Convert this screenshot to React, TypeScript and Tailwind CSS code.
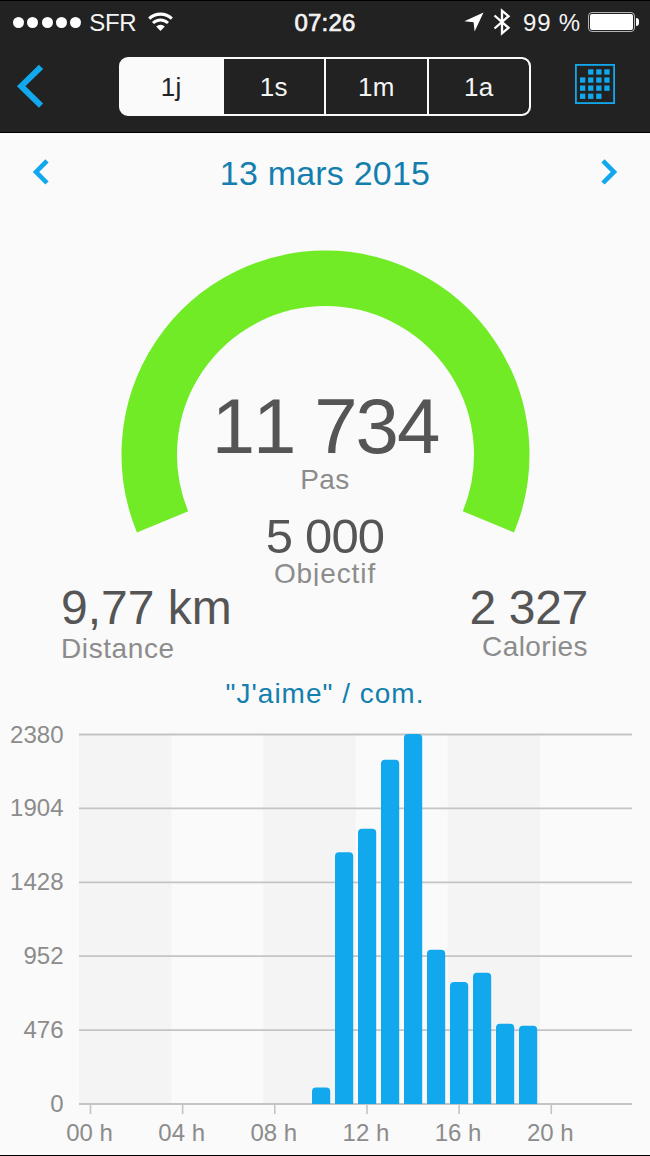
import React from 'react';
import clsx from 'clsx';

const periods = ['1j', '1s', '1m', '1a'];

const MAX = 2380;
const CHART_TOP = 734.5;
const CHART_BOTTOM = 1104;

const gridValues = [2380, 1904, 1428, 952, 476, 0];
const hours = ['00 h', '04 h', '08 h', '12 h', '16 h', '20 h'];
const bands = [79, 263.3, 447.6];

const steps = [
  { hour: 10, value: 103 },
  { hour: 11, value: 1618 },
  { hour: 12, value: 1770 },
  { hour: 13, value: 2214 },
  { hour: 14, value: 2380 },
  { hour: 15, value: 990 },
  { hour: 16, value: 782 },
  { hour: 17, value: 842 },
  { hour: 18, value: 514 },
  { hour: 19, value: 501 },
];

const yFor = (value: number) => CHART_BOTTOM - (value / MAX) * (CHART_BOTTOM - CHART_TOP);

const StatusBar: React.FC = () => (
  <div className="grid grid-cols-[1fr_auto_1fr] items-center h-[42px] text-2xl leading-none text-[#f4f4f4]">
    <div className="flex items-center pl-[13px]">
      <div className="flex gap-[3.3px]">
        {[0, 1, 2, 3, 4].map((dot) => (
          <span key={dot} className="w-[11px] h-[11px] rounded-full bg-white" />
        ))}
      </div>
      <span className="ml-2 relative top-px tracking-[-0.3px]">SFR</span>
      <svg className="ml-3 w-[25px] h-[20px]" viewBox="0 0 25 20" fill="none" stroke="white">
        <path d="M1.2 6.6 A16.5 16.5 0 0 1 23.8 6.6" strokeWidth="3.1" />
        <path d="M5 11.1 A10.6 10.6 0 0 1 20 11.1" strokeWidth="2.9" />
        <path d="M8.2 14.6 A6 6 0 0 1 16.8 14.6 L12.5 19 Z" fill="white" stroke="none" />
      </svg>
    </div>
    <span className="relative top-px tracking-[0.2px] [-webkit-text-stroke:0.7px_#f4f4f4]">07:26</span>
    <div className="flex items-center justify-end pr-[11px]">
      <svg className="w-[20px] h-[20px]" viewBox="0 0 20 20" fill="white">
        <path d="M19.5 0.5 L0.3 9.2 L9.6 10.3 L10.6 19.5 Z" />
      </svg>
      <svg className="ml-[9px] w-[18px] h-[28px]" viewBox="0 0 18 28" fill="none" stroke="white" strokeWidth="2.3">
        <path d="M1.5 7.5 L15.5 19.8 L9 25.3 V2.7 L15.5 8.2 L1.5 20.5" />
      </svg>
      <span className="ml-[12px] relative top-px tracking-[0.8px]">99 %</span>
      <div className="ml-[7px] w-[47px] h-[20px] rounded-[4px] border border-[#b5b5b5] p-px">
        <div className="w-full h-full rounded-[2px] bg-white" />
      </div>
      <span className="w-[3px] h-[8px] ml-px rounded-r-full bg-white" />
    </div>
  </div>
);

const CalendarIcon: React.FC = () => (
  <svg className="w-10 h-10" viewBox="0 0 40 40" fill="#12a8ee">
    <rect x="0.9" y="0.9" width="38.2" height="38.2" fill="none" stroke="#12a8ee" strokeWidth="1.8" />
    {[0, 1, 2, 3].map((row) =>
      [0, 1, 2, 3].map((col) =>
        (row === 0 && col === 0) || (row === 3 && col === 3) ? null : (
          <rect key={`${row}-${col}`} x={5 + col * 8.1} y={5.3 + row * 8.1} width="5.3" height="5.3" />
        )
      )
    )}
  </svg>
);

const Header: React.FC = () => (
  <header className="h-[133px] bg-[#222222] border-t border-b border-black">
    <StatusBar />
    <div className="flex items-start pt-[14px]">
      <button className="ml-4 mt-[7px]">
        <svg className="block w-[28px] h-[44px]" viewBox="0 0 28 44" fill="none" stroke="#12a8ee" strokeWidth="6">
          <path d="M25 2.8 L5.2 22.2 L25 41.6" />
        </svg>
      </button>
      <div className="ml-[75px] flex w-[412px] h-[59px] rounded-[9px] border-2 border-[#fafafa] bg-[#fafafa] gap-[2px] overflow-hidden">
        {periods.map((period, i) => (
          <button
            key={period}
            className={clsx(
              'flex-1 text-[26px] leading-[57px] tracking-[0.3px]',
              i === 0 ? 'bg-[#fafafa] text-[#222222]' : 'bg-[#222222] text-[#f4f4f4]',
              i === periods.length - 1 && 'rounded-r-[7px]'
            )}
          >
            {period}
          </button>
        ))}
      </div>
      <button className="ml-[44px] mt-[7px]">
        <CalendarIcon />
      </button>
    </div>
  </header>
);

const Gauge: React.FC = () => (
  <section className="relative text-center">
    <svg className="absolute inset-x-0 top-0 w-[650px] h-[330px]" viewBox="0 213 650 330">
      {/* 225 degree arc, open at the bottom */}
      <path
        d="M162.6 521.9 A176.25 176.25 0 1 1 488.4 521.9"
        fill="none"
        stroke="#70eb26"
        strokeWidth="55.5"
      />
    </svg>
    <div className="relative pt-[175px]">
      <p className="text-[78px] leading-[76px] text-[#555555] tracking-[-2px]">11 734</p>
      <p className="pt-[2px] text-[28px] leading-[28px] text-[#8c8c8c] tracking-[0.4px]">Pas</p>
      <p className="mt-[18px] text-[49px] leading-[49px] text-[#555555] tracking-[-0.8px]">5 000</p>
      <p className="h-[25px] overflow-hidden text-[28px] leading-[26px] text-[#8c8c8c] tracking-[0.9px]">Objectif</p>
    </div>
  </section>
);

const Stats: React.FC = () => (
  <section className="flex justify-between h-[82px] pl-[61px] pr-[62px] pt-px">
    <div>
      <p className="text-[48px] leading-[42px] text-[#555555]">9,77 km</p>
      <p className="text-[28px] leading-[40px] text-[#8c8c8c] tracking-[0.6px]">Distance</p>
    </div>
    <div className="text-right">
      <p className="text-[48px] leading-[42px] text-[#555555] tracking-[-0.3px]">2 327</p>
      <p className="text-[28px] leading-[36px] text-[#8c8c8c] tracking-[0.4px]">Calories</p>
    </div>
  </section>
);

const StepsChart: React.FC = () => (
  <svg className="block w-[650px] h-[437px]" viewBox="0 718 650 437">
    {bands.map((x) => (
      <rect key={x} x={x} y={CHART_TOP} width="92.4" height={CHART_BOTTOM - CHART_TOP} fill="#f4f4f4" />
    ))}
    {gridValues.map((value) => (
      <g key={value}>
        <line x1="79" x2="632" y1={yFor(value)} y2={yFor(value)} stroke="#c4c4c4" strokeWidth="1.8" />
        <text x="63.5" y={yFor(value) + 8} textAnchor="end" fontSize="24" fill="#8c8c8c">
          {value}
        </text>
      </g>
    ))}
    {hours.map((label, i) => (
      <g key={label}>
        <line x1={90.5 + i * 92.15} x2={90.5 + i * 92.15} y1="1104" y2="1114" stroke="#c4c4c4" strokeWidth="1.6" />
        <text x={89.5 + i * 92.15} y="1140.5" textAnchor="middle" fontSize="24" fill="#8c8c8c">
          {label}
        </text>
      </g>
    ))}
    {steps.map(({ hour, value }) => {
      const x = 312 + (hour - 10) * 23;
      const y = yFor(value) - 0.5;
      return (
        <path
          key={hour}
          d={`M${x} ${CHART_BOTTOM} V${y + 4} q0 -4 4 -4 h10.2 q4 0 4 4 V${CHART_BOTTOM} Z`}
          fill="#12a8ee"
        />
      );
    })}
  </svg>
);

const App: React.FC = () => {
  return (
    <div className="w-[650px] h-[1156px] overflow-hidden bg-[#fafafa] border-b border-black font-['Liberation_Sans',Arial,sans-serif] [font-kerning:none]">
      <Header />
      <div className="flex items-center justify-between h-20 px-8">
        <svg className="w-[17px] h-[28px]" viewBox="0 0 17 28" fill="none" stroke="#12a8ee" strokeWidth="4.6">
          <path d="M15 1.8 L4 12.9 L15 24" />
        </svg>
        <h1 className="text-[34px] leading-none text-[#147fae] tracking-[0.2px]">13 mars 2015</h1>
        <svg className="w-[17px] h-[28px]" viewBox="0 0 17 28" fill="none" stroke="#12a8ee" strokeWidth="4.6">
          <path d="M2 1.8 L13 12.9 L2 24" />
        </svg>
      </div>
      <Gauge />
      <Stats />
      <h2 className="pt-px -mb-px text-center text-[28px] leading-[50px] text-[#147fae] tracking-[1px]">"J'aime" / com.</h2>
      <StepsChart />
    </div>
  );
};

export default App;
